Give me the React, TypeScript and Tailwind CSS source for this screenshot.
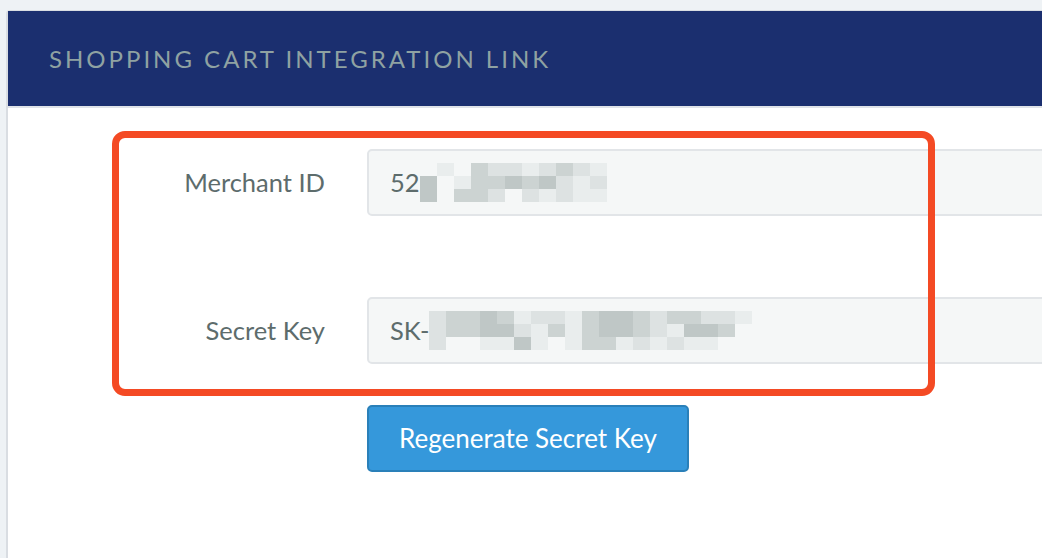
const C: Record<string, string> = {
  a: '#bfc7c6',
  b: '#ccd3d2',
  c: '#dde2e2',
  d: '#e9eded',
  _: 'transparent',
};

const merchantMosaic = [
  '_d_bccdcbcd',
  'a_dbbabacdc',
  'a_bbc_cdcdd',
];

const secretMosaic = [
  'cbbabdccdbaabcbbccd',
  'cbbaacdbdbaabcdaab_',
  'c__ddad_dbbdcdcdd__',
];

const Mosaic = ({ rows, cell }: { rows: string[]; cell: number }) => (
  <div className="flex flex-col">
    {rows.map((row, i) => (
      <div key={i} className="flex">
        {row.split('').map((k, j) => (
          <span key={j} style={{ width: cell + 4, height: cell, background: C[k] }} />
        ))}
      </div>
    ))}
  </div>
);

const Field = ({ label, prefix, rows }: { label: string; prefix: string; rows: string[] }) => (
  <div className="flex items-center">
    <label className="w-[359px] text-right pr-[42px] text-[25.5px] text-[#5d6c6c]">{label}</label>
    <div className="flex-1 h-[67px] bg-[#f5f7f7] border-2 border-[#e2e5e8] rounded-[5px] flex items-center pl-[21px] text-[25.5px] text-[#5d6c6c]">
      <span>{prefix}</span>
      <Mosaic rows={rows} cell={13} />
    </div>
  </div>
);

export default function App() {
  return (
    <div className="min-h-screen bg-[#eef2f5] pt-[10px] pl-[6px] font-['Lato',sans-serif] overflow-hidden">
      <div className="w-[1100px] bg-white border-l-2 border-t border-[#d9dde2] rounded-tl-[4px] h-[560px]">
        <div className="h-[97px] bg-[#1b2f6f] border-b-2 border-[#dfe3e8] flex items-center pl-[41px]">
          <h2 className="text-[24px] tracking-[3px] text-[#8fa2a2]">SHOPPING CART INTEGRATION LINK</h2>
        </div>
        <div className="relative pt-[41px]">
          <div className="flex flex-col gap-[81px]">
            <Field label="Merchant ID" prefix="52" rows={merchantMosaic} />
            <Field label="Secret Key" prefix="SK-" rows={secretMosaic} />
          </div>
          <div className="pl-[359px] pt-[41px]">
            <button className="h-[67px] px-[30px] bg-[#3598db] border-2 border-[#2a80b9] rounded-[5px] text-white text-[26px]">
              Regenerate Secret Key
            </button>
          </div>
          <div className="absolute left-[104px] top-[23px] w-[823px] h-[265px] border-[7px] border-[#f44a24] rounded-[13px]" />
        </div>
      </div>
    </div>
  );
}
